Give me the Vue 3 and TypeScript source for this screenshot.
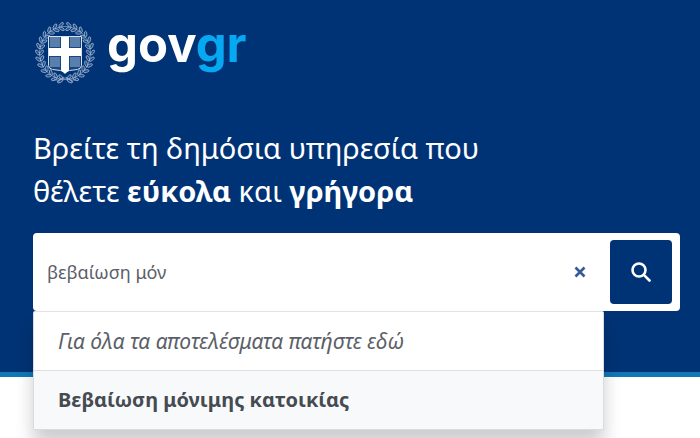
<script setup lang="ts">
import { ref } from 'vue'

const query = ref('βεβαίωση μόν')

interface Leaf {
  x: number
  y: number
  turn: number
}

// Two laurel branches rise from the bottom of the crest and meet at the top.
const leaves: Leaf[] = []
for (let i = 0; i < 13; i++) {
  const angle = ((10 + i * 13.5) * Math.PI) / 180
  for (const side of [-1, 1]) {
    for (const offset of [-2, 2]) {
      const dx = side * Math.sin(angle)
      const dy = Math.cos(angle)
      const tangent = (Math.atan2(-Math.sin(angle), side * Math.cos(angle)) * 180) / Math.PI
      leaves.push({
        x: 30 + dx * (25.5 + offset),
        y: 31 + dy * (26.5 + offset),
        turn: tangent + side * (offset > 0 ? 38 : -38),
      })
    }
  }
}
const stripes = [16, 18, 20, 22, 24, 36, 38, 40, 42, 44]
</script>

<template>
  <div class="page">
    <header class="banner">
      <a class="brand" href="#" aria-label="govgr">
        <svg class="crest" viewBox="0 0 60 62" aria-hidden="true">
          <ellipse class="stem" cx="30" cy="31" rx="25.5" ry="26.5" />
          <ellipse
            v-for="(leaf, i) in leaves"
            :key="i"
            class="leaf"
            rx="2.9"
            ry="1.3"
            :transform="`translate(${leaf.x} ${leaf.y}) rotate(${leaf.turn})`"
          />
          <path class="ribbon" d="M19 57c4 3 7-1 11-1s7 4 11 1M22 60l7-5M38 60l-7-5" />
          <path class="shield" d="M13.500 14.500h33v29q0 3-4 4l-8 1q-3 .5-4.500 3-1.500-2.500-4.500-3l-8-1q-4-1-4-4z" />
          <path v-for="y in stripes" :key="y" class="stripe" :d="`M15 ${y}h10M35 ${y}h10`" />
          <path class="cross" d="M26 15h8v11h12v8h-12v14.500l-4 3-4-3v-14.500h-12v-8h12z" />
        </svg>
        <span class="wordmark">gov<span class="country">gr</span></span>
      </a>

      <h1 class="title">
        Βρείτε τη δημόσια υπηρεσία που<br />
        θέλετε <strong>εύκολα</strong> και <strong>γρήγορα</strong>
      </h1>

      <form class="search" role="search" @submit.prevent>
        <input v-model="query" class="field" type="text" aria-label="Αναζήτηση" autocomplete="off" />
        <button class="clear" type="button" aria-label="Καθαρισμός" @click="query = ''">
          <svg width="12" height="12" viewBox="0 0 12 12" aria-hidden="true">
            <path d="M1.500 1.500l9 9M10.500 1.500l-9 9" />
          </svg>
        </button>
        <button class="submit" type="submit" aria-label="Αναζήτηση">
          <svg width="20" height="20" viewBox="0 0 20 20" aria-hidden="true">
            <circle cx="8" cy="8" r="6.500" />
            <path d="M12.800 12.800l5.700 5.700" />
          </svg>
        </button>
        <ul class="results">
          <li><a class="result all" href="#">Για όλα τα αποτελέσματα πατήστε εδώ</a></li>
          <li><a class="result match" href="#">Βεβαίωση μόνιμης κατοικίας</a></li>
        </ul>
      </form>
    </header>
  </div>
</template>

<style>
body {
  background: #fff;
}
</style>

<style scoped>
.page {
  min-height: 100vh;
  overflow: hidden;
  font-family: 'Noto Sans', sans-serif;
}

.banner {
  padding: 20px 20px 61px 33px;
  background: #003375;
  border-bottom: 5px solid #1177b7;
}

.brand {
  display: flex;
  gap: 12px;
  height: 64px;
  color: #fff;
  text-decoration: none;
}

.crest {
  width: 60px;
  height: 62px;
  margin-top: 2px;
  margin-left: 2px;
}

.stem,
.ribbon {
  fill: none;
  stroke: #9fb5d2;
  stroke-width: 0.7;
}

.leaf {
  fill: #1c4a86;
  stroke: #b4c5dc;
  stroke-width: 0.7;
}

.shield {
  fill: #174783;
  stroke: #d5dfec;
  stroke-width: 1;
}

.stripe {
  stroke: #9fb8d5;
  stroke-width: 1;
}

.cross {
  fill: #fff;
}

.wordmark {
  font: 700 49px/50px Inter, sans-serif;
}

.country {
  color: #06a9f1;
}

.title {
  margin: 42px 0 21px;
  color: #fff;
  font-size: 29px;
  font-weight: 400;
  line-height: 43px;
}

.title strong {
  font-weight: 700;
}

.search {
  position: relative;
  display: flex;
  align-items: center;
  padding: 7px 8px 7px 14px;
  border-radius: 4px;
  background: #fff;
}

.field {
  flex: 1;
  min-width: 0;
  height: 64px;
  padding: 0;
  border: 0;
  outline: 0;
  background: none;
  color: #5b6068;
  font: 18px/24px 'Noto Sans', sans-serif;
}

.clear,
.submit {
  display: flex;
  align-items: center;
  justify-content: center;
  padding: 0;
  border: 0;
  cursor: pointer;
}

.clear {
  width: 60px;
  height: 64px;
  background: none;
}

.clear path {
  fill: none;
  stroke: #365998;
  stroke-width: 2.6;
}

.submit {
  width: 62px;
  height: 64px;
  border-radius: 4px;
  background: #003375;
}

.submit circle,
.submit path {
  fill: none;
  stroke: #fff;
  stroke-width: 2.6;
  stroke-linecap: round;
}

.results {
  position: absolute;
  top: 100%;
  left: 0;
  right: 76px;
  margin: 0;
  padding: 0;
  border: 1px solid #d9dcdf;
  border-top-color: #e1e2e4;
  border-radius: 2px;
  background: #fff;
  box-shadow: 0 14px 18px rgba(0, 0, 0, 0.2);
  list-style: none;
}

.result {
  display: block;
  padding: 16px 24px;
  color: #5b6068;
  line-height: 26px;
  text-decoration: none;
}

.all {
  font-size: 21px;
  font-style: italic;
}

.match {
  border-top: 1px solid #dcdfe3;
  background: #f8f9fb;
  color: #464b52;
  font-size: 20px;
  font-weight: 700;
}
</style>
